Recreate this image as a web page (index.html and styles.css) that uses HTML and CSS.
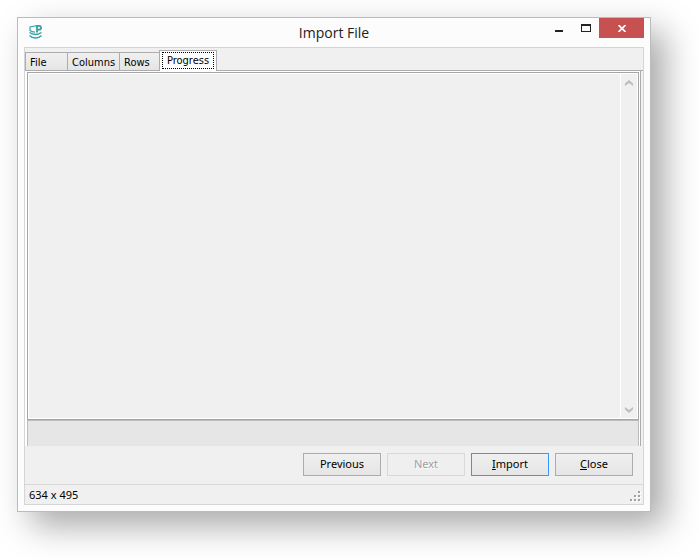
FILE: index.html
```
<!DOCTYPE html>
<html lang="en">
<head>
    <meta charset="utf-8">
    <title>Import File</title>
    <link rel="stylesheet" href="styles.css">
</head>
<body>
    <div class="window">
        <header class="titlebar">
            <svg class="logo" width="13" height="14" viewBox="0 0 13 14" fill="none" stroke="#35a3a3">
                <path d="M6 1L1 2v3.500c1.500 1.300 3 1.600 5 1.600" stroke-width="1.200"/>
                <path d="M.5 7.500c3 2.600 9 2.600 12 0M.5 10.500c3 3.400 9 3.400 12 0" stroke-width="1.400"/>
                <path d="M8 .5v7M6.300 .8H10c2.800 0 2.800 3.800 0 3.800H8" stroke-width="1.800"/>
            </svg>
            <h1>Import File</h1>
            <div class="window-controls">
                <button class="win-btn" aria-label="Minimize">
                    <svg class="icon-min" width="8" height="2"><path d="M0 0h8v2H0z" fill="#222"/></svg>
                </button>
                <button class="win-btn" aria-label="Maximize">
                    <svg width="10" height="8"><path d="M0 0h10v8H0zM1 2v5h8V2z" fill="#222" fill-rule="evenodd"/></svg>
                </button>
                <button class="win-btn win-close" aria-label="Close window">
                    <svg width="8" height="7" viewBox="0 0 8 7"><path d="M.5 0l7 7M7.500 0l-7 7" stroke="#fff" stroke-width="1.700"/></svg>
                </button>
            </div>
        </header>

        <main class="client">
            <div class="tabs" role="tablist">
                <button class="tab tab-file" role="tab">File</button>
                <button class="tab tab-columns" role="tab">Columns</button>
                <button class="tab tab-rows" role="tab">Rows</button>
                <button class="tab tab-active" role="tab" aria-selected="true"><span>Progress</span></button>
            </div>

            <div class="page">
                <div class="log">
                    <div class="log-text"></div>
                    <div class="scrollbar">
                        <svg width="8" height="6"><path d="M0 6V3.500L4 0l4 3.500V6L4 3z" fill="#bdbdbd"/></svg>
                        <svg width="8" height="6"><path d="M0 0v2.500L4 6l4-3.500V0L4 3z" fill="#bdbdbd"/></svg>
                    </div>
                </div>
                <div class="progress"></div>
            </div>

            <div class="buttons">
                <button class="btn">Previous</button>
                <button class="btn" disabled>Next</button>
                <button class="btn btn-default"><u>I</u>mport</button>
                <button class="btn"><u>C</u>lose</button>
            </div>

            <footer class="statusbar">
                <span>634 x 495</span>
                <svg width="11" height="11">
                    <path d="M9 1h2v2H9zM5 5h2v2H5zM9 5h2v2H9zM1 9h2v2H1zM5 9h2v2H5zM9 9h2v2H9z" fill="#fff"/>
                    <path d="M8 0h2v2H8zM4 4h2v2H4zM8 4h2v2H8zM0 8h2v2H0zM4 8h2v2H4zM8 8h2v2H8z" fill="#a0a0a0"/>
                </svg>
            </footer>
        </main>
    </div>
</body>
</html>
```

FILE: styles.css
```
* {
    box-sizing: border-box;
}
body {
    margin: 0;
    padding: 17px 48px 48px 17px;
    min-height: 100vh;
    display: flex;
    overflow: hidden;
    background: #fff;
    color: #000;
    font: 11px/14px "Noto Sans", sans-serif;
}
button {
    font: inherit;
    color: inherit;
    padding: 0;
    border: none;
    border-radius: 0;
    background: none;
}
svg {
    display: block;
}
.window {
    flex: 1;
    display: flex;
    flex-direction: column;
    padding: 0 6px 6px;
    background: #fcfcfc;
    border: 1px solid #bbb;
    box-shadow: 14px 14px 32px rgba(0, 0, 0, 0.34);
}

/* title bar */
.titlebar {
    display: grid;
    grid-template-columns: 1fr auto 1fr;
    height: 29px;
}
.logo {
    margin: 7px 0 0 5px;
}
h1 {
    margin: 0;
    font: 14px/29px "Open Sans", sans-serif;
    color: #222;
}
.window-controls {
    display: flex;
    justify-content: flex-end;
    height: 20px;
}
.win-btn {
    width: 27px;
    display: flex;
    align-items: center;
    justify-content: center;
}
.icon-min {
    margin-top: 6px;
}
.win-close {
    width: 45px;
    background: #c75050;
}

/* client area */
.client {
    flex: 1;
    display: flex;
    flex-direction: column;
    background: #f0f0f0;
    border: 1px solid #d5d5d5;
}
.tabs {
    display: flex;
    align-items: flex-end;
    height: 23px;
    padding-top: 2px;
    box-shadow: inset 0 -1px #acacac;
    font-family: "DejaVu Sans Condensed", "Noto Sans", sans-serif;
}
.tab {
    height: 19px;
    padding: 2px 0 0 4px;
    text-align: left;
    background: linear-gradient(#f0f0f0, #e5e5e5);
    border: 1px solid #acacac;
    border-right: none;
}
.tab-file {
    width: 42px;
}
.tab-columns {
    width: 52px;
}
.tab-rows {
    width: 40px;
}
.tab-active {
    width: 58px;
    height: 21px;
    padding: 0 0 2px;
    text-align: center;
    background: #fff;
    border-right: 1px solid #acacac;
    border-bottom: none;
}
.tab-active span {
    display: block;
    margin: 0 2px;
    padding-top: 1px;
    border: 1px dotted #000;
}
.page {
    flex: 1;
    display: flex;
    flex-direction: column;
    margin-right: 2px;
    padding: 1px 1px 0 2px;
    background: #fff;
    border-right: 1px solid #acacac;
}
.log {
    flex: 1;
    display: flex;
    gap: 1px;
    padding: 1px;
    background: #fff;
    border: 1px solid #a5a5a5;
}
.log-text {
    flex: 1;
    background: #f0f0f0;
}
.scrollbar {
    width: 16px;
    display: flex;
    flex-direction: column;
    justify-content: space-between;
    align-items: center;
    padding: 6px 0 5px;
    background: #f0f0f0;
}
.progress {
    height: 26px;
    background: #e6e6e6;
    border: 1px solid #bcbcbc;
    border-bottom: none;
}

/* buttons */
.buttons {
    display: flex;
    justify-content: flex-end;
    gap: 6px;
    padding: 7px 10px 8px;
}
.btn {
    width: 78px;
    height: 23px;
    padding-bottom: 2px;
    background: linear-gradient(#f0f0f0, #e5e5e5);
    border: 1px solid #acacac;
}
.btn:disabled {
    color: #a0a0a0;
    text-shadow: 1px 1px #fff;
    background: #efefef;
    border-color: #d9d9d9;
}
.btn-default {
    border-color: #3399ff;
}

/* status bar */
.statusbar {
    display: flex;
    align-items: center;
    justify-content: space-between;
    height: 20px;
    padding: 0 2px 0 4px;
    border-top: 1px solid #d7d7d7;
}
.statusbar svg {
    margin-top: 4px;
}
```
